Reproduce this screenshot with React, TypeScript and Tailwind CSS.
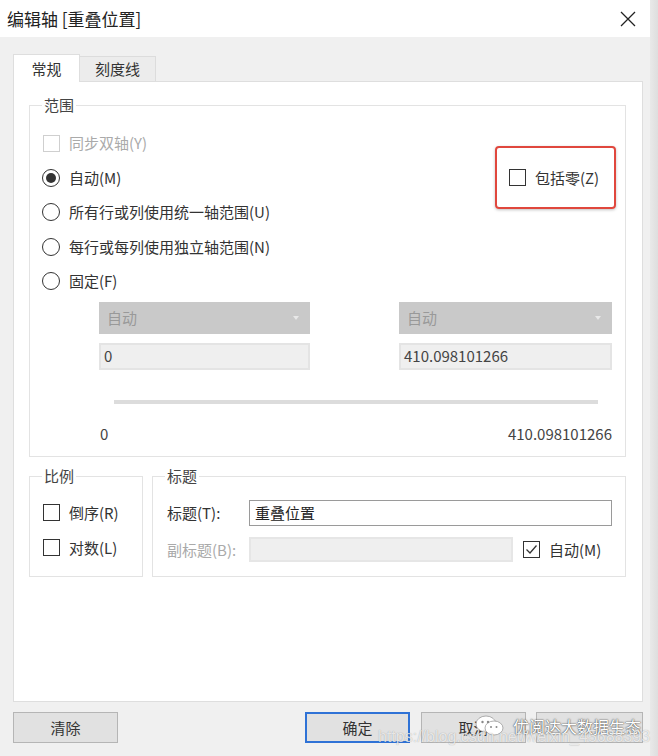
import React from "react";

const FONT = { fontFamily: '"Noto Sans CJK SC", "Noto Sans", sans-serif' };

function Check({ disabled, checked }: { disabled?: boolean; checked?: boolean }) {
  return (
    <span
      className={
        "flex h-[17px] w-[17px] shrink-0 items-center justify-center border bg-white " +
        (disabled ? "border-[#cfcfcf]" : "border-[#333]")
      }
    >
      {checked && (
        <svg width="13" height="13" viewBox="0 0 13 13" fill="none">
          <path d="M1.5 6.5 L5 10 L11.5 2.5" stroke="#333" strokeWidth="1.3" />
        </svg>
      )}
    </span>
  );
}

function Radio({ checked }: { checked?: boolean }) {
  return (
    <span className="flex h-[18px] w-[18px] shrink-0 items-center justify-center rounded-full border-[1.5px] border-[#333] bg-white">
      {checked && <span className="h-[10px] w-[10px] rounded-full bg-[#333]" />}
    </span>
  );
}

function Group({
  title,
  className,
  children,
}: {
  title: string;
  className: string;
  children: React.ReactNode;
}) {
  return (
    <div className={"relative shrink-0 border border-[#e3e3e3] " + className}>
      <span className="absolute left-[12px] top-[-11px] bg-white px-[2px] text-[15px] leading-[20px] text-[#444]">
        {title}
      </span>
      {children}
    </div>
  );
}

function Arrow() {
  return (
    <svg width="6" height="4" viewBox="0 0 6 4">
      <path d="M0 0 L6 0 L3 4 Z" fill="#e8e8e8" />
    </svg>
  );
}

export default function App() {
  return (
    <div className="flex h-[756px] w-[658px] overflow-hidden bg-[#f0f0f0] text-[#333]" style={FONT}>
      <div className="flex w-[650px] shrink-0 flex-col">
        {/* title bar */}
        <div className="flex h-[37px] items-center justify-between bg-white pl-[7px] pr-[12px]">
          <span className="text-[17px] leading-[22px] text-[#222]">编辑轴 [重叠位置]</span>
          <svg width="16" height="16" viewBox="0 0 16 16" className="mr-[2px]">
            <path d="M1 1 L15 15 M15 1 L1 15" stroke="#222" strokeWidth="1.3" />
          </svg>
        </div>

        <div className="flex flex-col pl-[13px] pr-[7px] pt-[17px]">
          {/* tabs */}
          <div className="flex h-[27px] items-end">
            <div className="relative z-10 -mb-px flex h-[28px] w-[67px] items-center justify-center border border-b-0 border-[#dedede] bg-white text-[15px] leading-[20px]">
              常规
            </div>
            <div className="flex h-[25px] w-[76px] items-center justify-center border border-b-0 border-l-0 border-[#dcdcdc] bg-[#ececec] text-[15px] leading-[20px] text-[#333]">
              刻度线
            </div>
          </div>

          {/* tab panel */}
          <div className="flex h-[621px] w-[630px] flex-col border border-[#dedede] bg-white pl-[15px] pr-[16px] pt-[23px]">
            {/* range */}
            <Group title="范围" className="h-[352px] w-[597px]">
              <div className="flex flex-col pl-[13px] pt-[20px]">
                <div className="flex h-[34.5px] items-center gap-[9px] text-[15px] leading-[20px] text-[#aaa]">
                  <Check disabled />
                  <span>同步双轴(Y)</span>
                </div>
                <div className="flex h-[34.5px] items-center text-[15px] leading-[20px]">
                  <span className="-ml-px flex items-center gap-[9px]">
                    <Radio checked />
                    <span>自动(M)</span>
                  </span>
                  <span className="ml-auto mr-[14px] flex w-[102px] items-center gap-[9px]">
                    <Check />
                    <span className="whitespace-nowrap">包括零(Z)</span>
                  </span>
                </div>
                <div className="flex h-[34.5px] items-center text-[15px] leading-[20px]">
                  <span className="-ml-px flex items-center gap-[9px]">
                    <Radio />
                    <span>所有行或列使用统一轴范围(U)</span>
                  </span>
                </div>
                <div className="flex h-[34.5px] items-center text-[15px] leading-[20px]">
                  <span className="-ml-px flex items-center gap-[9px]">
                    <Radio />
                    <span>每行或每列使用独立轴范围(N)</span>
                  </span>
                </div>
                <div className="flex h-[34.5px] items-center text-[15px] leading-[20px]">
                  <span className="-ml-px flex items-center gap-[9px]">
                    <Radio />
                    <span>固定(F)</span>
                  </span>
                </div>
              </div>

              <div className="ml-[69px] mt-[3px] grid grid-cols-[211px_213px] gap-x-[89px] gap-y-[9px]">
                <div className="flex h-[32px] items-center justify-between bg-[#c9c9c9] pl-[8px] pr-[11px] text-[15px] leading-[20px] text-[#999]">
                  <span>自动</span>
                  <Arrow />
                </div>
                <div className="flex h-[32px] items-center justify-between bg-[#c9c9c9] pl-[8px] pr-[11px] text-[15px] leading-[20px] text-[#999]">
                  <span>自动</span>
                  <Arrow />
                </div>
                <div className="flex h-[27px] items-center border-2 border-[#e4e4e4] bg-[#efefef] pl-[3px] text-[15px] leading-[20px] text-[#444]">
                  0
                </div>
                <div className="flex h-[27px] items-center border-2 border-[#e4e4e4] bg-[#efefef] pl-[3px] text-[15px] leading-[20px] text-[#444]">
                  410.098101266
                </div>
              </div>

              <div className="ml-[84px] mt-[30px] h-[4px] w-[484px] bg-[#dcdcdc]" />

              <div className="ml-[70px] mt-[20px] flex w-[512px] justify-between text-[15px] leading-[20px] text-[#444]">
                <span>0</span>
                <span>410.098101266</span>
              </div>

              {/* annotation highlight */}
              <div className="pointer-events-none absolute left-[465px] top-[40px] h-[63px] w-[121px] rounded-[4px] border-2 border-[#e0473d] shadow-[0_1px_3px_rgba(0,0,0,0.25)]" />
            </Group>

            {/* lower groups */}
            <div className="mt-[19px] flex gap-[9px]">
              <Group title="比例" className="h-[101px] w-[114px]">
                <div className="flex flex-col pl-[13px] pt-[18px]">
                  <div className="flex h-[35px] items-center gap-[9px] text-[15px] leading-[20px]">
                    <Check />
                    <span>倒序(R)</span>
                  </div>
                  <div className="flex h-[35px] items-center gap-[9px] text-[15px] leading-[20px]">
                    <Check />
                    <span>对数(L)</span>
                  </div>
                </div>
              </Group>

              <Group title="标题" className="h-[101px] w-[474px]">
                <div className="flex flex-col pl-[14px] pt-[23px]">
                  <div className="flex h-[26px] items-center text-[15px] leading-[20px]">
                    <span className="w-[82px]">标题(T):</span>
                    <div className="flex h-[26px] w-[363px] items-center border border-[#9a9a9a] bg-white pl-[5px] text-[#222]">
                      重叠位置
                    </div>
                  </div>
                  <div className="mt-[11px] flex h-[25px] items-center text-[15px] leading-[20px]">
                    <span className="w-[82px] text-[#aaa]">副标题(B):</span>
                    <div className="h-[25px] w-[264px] border-2 border-[#e6e6e6] bg-[#efefef]" />
                    <span className="ml-[10px] flex items-center gap-[9px]">
                      <Check checked />
                      <span>自动(M)</span>
                    </span>
                  </div>
                </div>
              </Group>
            </div>
          </div>

          {/* buttons */}
          <div className="relative mt-[10px] flex h-[31px] w-[630px] items-stretch text-[15px] leading-[20px]">
            <div className="flex w-[105px] items-center justify-center border border-[#b5b5b5] bg-[#e1e1e1]">
              清除
            </div>
            <div className="ml-auto flex w-[105px] items-center justify-center border-2 border-[#2f72d6] bg-[#e1e1e1]">
              确定
            </div>
            <div className="ml-[11px] flex w-[105px] items-center justify-center border border-[#b5b5b5] bg-[#e1e1e1]">
              取消
            </div>
            <div className="ml-[10px] w-[107px] border border-[#b5b5b5] bg-[#e1e1e1]" />

            {/* watermark overlay */}
            <div className="pointer-events-none absolute left-[462px] top-[3px] flex items-center gap-[8px]">
              <svg width="30" height="22" viewBox="0 0 30 22">
                <ellipse cx="11" cy="9" rx="10" ry="8" fill="#ffffff" stroke="#9a9a9a" strokeWidth="0.8" />
                <ellipse cx="19" cy="13" rx="9" ry="7" fill="#ffffff" stroke="#9a9a9a" strokeWidth="0.8" />
                <circle cx="7.5" cy="7" r="1.2" fill="#888" />
                <circle cx="13" cy="7" r="1.2" fill="#888" />
                <circle cx="16" cy="12" r="1" fill="#888" />
                <circle cx="21.5" cy="12" r="1" fill="#888" />
              </svg>
              <span
                className="whitespace-nowrap text-[16px] leading-[20px] text-white"
                style={{ textShadow: "0 0 2px #555, 0 0 1px #333" }}
              >
                优阅达大数据生态
              </span>
            </div>
            <div
              className="pointer-events-none absolute left-[365px] top-[15px] whitespace-nowrap text-[16px] leading-[20px] text-[rgba(255,255,255,0.75)]"
              style={{ fontFamily: '"Liberation Sans", sans-serif', textShadow: "0 0 1px rgba(0,0,0,0.35)" }}
            >
              https://blog.csdn.net/weixin_45688393
            </div>
          </div>
        </div>
      </div>
      <div className="h-full w-[8px] shrink-0 bg-gradient-to-r from-[#e9e9e9] to-[#dedede]" />
    </div>
  );
}
